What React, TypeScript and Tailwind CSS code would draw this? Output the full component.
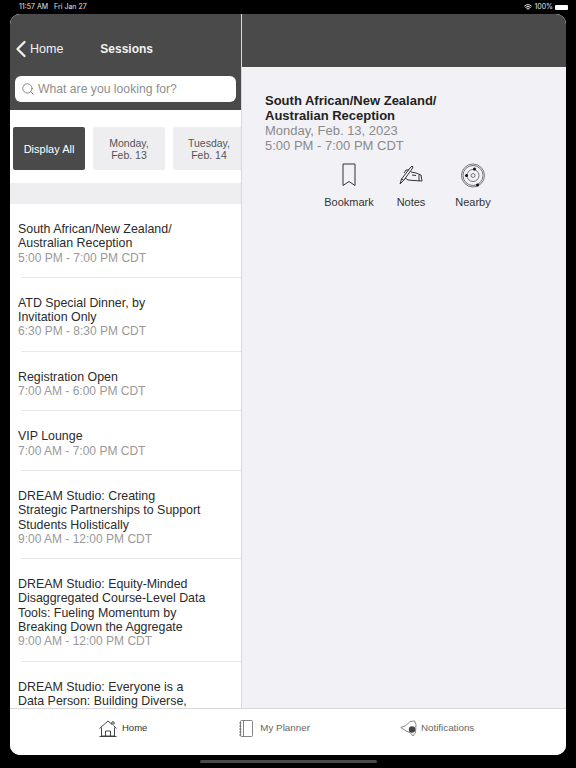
import { Search, ChevronLeft, Wifi } from "lucide-react";

const sessions = [
  { title: ["South African/New Zealand/", "Australian Reception"], time: "5:00 PM - 7:00 PM CDT" },
  { title: ["ATD Special Dinner, by", "Invitation Only"], time: "6:30 PM - 8:30 PM CDT" },
  { title: ["Registration Open"], time: "7:00 AM - 6:00 PM CDT" },
  { title: ["VIP Lounge"], time: "7:00 AM - 7:00 PM CDT" },
  {
    title: ["DREAM Studio: Creating", "Strategic Partnerships to Support", "Students Holistically"],
    time: "9:00 AM - 12:00 PM CDT",
  },
  {
    title: [
      "DREAM Studio: Equity-Minded",
      "Disaggregated Course-Level Data",
      "Tools: Fueling Momentum by",
      "Breaking Down the Aggregate",
    ],
    time: "9:00 AM - 12:00 PM CDT",
  },
  { title: ["DREAM Studio: Everyone is a", "Data Person: Building Diverse,"] },
];

function BookmarkIcon() {
  return (
    <svg width="14" height="24" viewBox="0 0 14 24" fill="none" stroke="#333" strokeWidth="1">
      <path d="M1 1h12v21.5l-6-4-6 4z" />
    </svg>
  );
}

function NotesIcon() {
  return (
    <svg width="24" height="22" viewBox="0 0 24 22" fill="none" stroke="#333" strokeWidth="1" strokeLinejoin="round">
      <path d="M1 20l1.5-5L11 4l2-2 1 1-1 2-8 11z" />
      <path d="M2.5 15l2.5 1.5" />
      <path d="M5 9l2-3h3M12 8l5 1 5 2 1 6-8-.5-6-.5-3-2" />
      <path d="M13 11l4 .5M20 11v6" />
    </svg>
  );
}

function NearbyIcon() {
  return (
    <svg width="24" height="25" viewBox="0 0 24 25" fill="none" stroke="#444" strokeWidth="0.7">
      <circle cx="12" cy="12.5" r="11.5" />
      <circle cx="12" cy="12.5" r="10" />
      <circle cx="12" cy="12.5" r="6" />
      <circle cx="12" cy="12.5" r="2" />
      <circle cx="13.5" cy="6" r="1.5" fill="#111" stroke="none" />
      <circle cx="5.5" cy="12.5" r="1.5" fill="#111" stroke="none" />
      <circle cx="16.5" cy="22" r="1.5" fill="#111" stroke="none" />
    </svg>
  );
}

function HomeIcon() {
  return (
    <svg width="18" height="17" viewBox="0 0 18 17" fill="none" stroke="#333" strokeWidth="0.9">
      <path d="M0.5 8.5L9 1l4 3.5M14.5 5.5l3 3" />
      <circle cx="14" cy="3" r="1.3" />
      <path d="M2.5 7.5V16h13V7.5M0.5 16.5h17" />
      <path d="M6.5 16v-5h5v5" />
    </svg>
  );
}

function PlannerIcon() {
  return (
    <svg width="14" height="17" viewBox="0 0 14 17" fill="none" stroke="#666" strokeWidth="0.8">
      <rect x="1.5" y="0.5" width="12" height="16" rx="1" />
      <path d="M4.5 0.5v16M0 3h2.5M0 6h2.5M0 9h2.5M0 12h2.5M0 15h2.5" />
    </svg>
  );
}

function BellIcon() {
  return (
    <svg width="17" height="17" viewBox="0 0 17 17" fill="none" stroke="#777" strokeWidth="0.9" strokeLinejoin="round">
      <path d="M0.8 7.5L6 5.5 10 1.5l4.5-.5 1.5 3.5-.5 8-2.5 3.5-3-3.5-4-1.5z" />
      <circle cx="12" cy="9.5" r="3.2" fill="#444" stroke="none" />
    </svg>
  );
}

export default function App() {
  return (
    <div className="flex h-[768px] w-[576px] flex-col overflow-hidden bg-black font-['Liberation_Sans',Arial,sans-serif]">
      <div className="flex h-[14px] items-center justify-between pl-[19px] pr-[8px] font-['Inter',sans-serif] text-[7px] text-[#e5e5e5]">
        <div className="flex gap-[6px]">
          <span>11:57 AM</span>
          <span>Fri Jan 27</span>
        </div>
        <div className="flex items-center gap-[2px]">
          <Wifi size={8} strokeWidth={3} />
          <span>100%</span>
          <div className="h-[5px] w-[13px] rounded-[1px] bg-white" />
        </div>
      </div>

      <div className="mx-[10px] flex h-[741px] w-[556px] flex-col overflow-hidden rounded-[10px] bg-white">
        <div className="flex min-h-0 flex-1">
          {/* left column */}
          <div className="flex w-[231px] flex-col overflow-hidden bg-white">
            <div className="h-[96px] bg-[#4a4a4a] px-[5px]">
              <div className="flex h-[62px] items-center pt-[8px] text-white">
                <ChevronLeft size={28} strokeWidth={2} className="ml-[-8px] mr-[-5px] shrink-0 text-[#f2f2f2]" />
                <span className="text-[12.5px] text-[#f2f2f2]">Home</span>
                <span className="ml-[37px] text-[12px] font-bold text-[#f2f2f2]">Sessions</span>
              </div>
              <div className="flex h-[26px] w-[221px] items-center rounded-[6px] bg-white pl-[6px] text-[#8e8e8e]">
                <Search size={14} strokeWidth={1.5} className="text-[#777]" />
                <span className="ml-[3px] text-[12.2px]">What are you looking for?</span>
              </div>
            </div>

            <div className="flex gap-[8px] overflow-hidden pl-[3px] pt-[17px] text-[10.5px] leading-[12px]">
              <div className="flex h-[43px] w-[72px] shrink-0 items-center justify-center rounded-[2px] bg-[#4a4a4a] text-center text-[11px] text-white">
                Display All
              </div>
              <div className="flex h-[43px] w-[72px] shrink-0 items-center justify-center rounded-[2px] bg-[#eeeef1] text-center text-[#555]">
                Monday,
                <br />
                Feb. 13
              </div>
              <div className="flex h-[43px] w-[72px] shrink-0 items-center justify-center rounded-[2px] bg-[#eeeef1] text-center text-[#555]">
                Tuesday,
                <br />
                Feb. 14
              </div>
            </div>

            <div className="mt-[13px] h-[21px] shrink-0 bg-[#eeeef1]" />

            <div className="min-h-0 flex-1 overflow-hidden">
              {sessions.map((s) => (
                <div key={s.title[0]} className="pl-[8px] pt-[18px] text-[12.4px] leading-[14.3px]">
                  <div className="text-[#2b2b2b]">
                    {s.title.map((line) => (
                      <div key={line}>{line}</div>
                    ))}
                  </div>
                  {s.time && <div className="text-[12px] text-[#999]">{s.time}</div>}
                  {s.time && <div className="ml-[3px] mt-[12px] border-b border-[#e8e8ea]" />}
                </div>
              ))}
            </div>
          </div>

          {/* right column */}
          <div className="flex flex-1 flex-col border-l border-[#d8d8da] bg-[#f2f2f6]">
            <div className="h-[53px] shrink-0 bg-[#4a4a4a]" />
            <div className="pl-[23px] pt-[26px] text-[13px] leading-[15px]">
              <div className="font-bold text-[#222]">
                South African/New Zealand/
                <br />
                Australian Reception
              </div>
              <div className="text-[#8a8a8a]">Monday, Feb. 13, 2023</div>
              <div className="text-[#8a8a8a]">5:00 PM - 7:00 PM CDT</div>
            </div>
            <div className="ml-[76px] mt-[9px] flex text-[11px] text-[#333]">
              <div className="flex w-[62px] flex-col items-center">
                <div className="flex h-[26px] items-center">
                  <BookmarkIcon />
                </div>
                <span className="mt-[6px]">Bookmark</span>
              </div>
              <div className="flex w-[62px] flex-col items-center">
                <div className="flex h-[26px] items-center">
                  <NotesIcon />
                </div>
                <span className="mt-[6px]">Notes</span>
              </div>
              <div className="flex w-[62px] flex-col items-center">
                <div className="flex h-[26px] items-center">
                  <NearbyIcon />
                </div>
                <span className="mt-[6px]">Nearby</span>
              </div>
            </div>
          </div>
        </div>

        {/* tab bar */}
        <div className="flex h-[47px] shrink-0 items-center border-t border-[#d8d8da] bg-white pb-[7px] text-[9.8px]">
          <div className="ml-[89px] flex items-center gap-[5px] text-[#333]">
            <HomeIcon />
            <span className="text-[9.5px]">Home</span>
          </div>
          <div className="ml-[92px] flex items-center gap-[7px] text-[#666]">
            <PlannerIcon />
            <span>My Planner</span>
          </div>
          <div className="ml-[90px] flex items-center gap-[4px] text-[#666]">
            <BellIcon />
            <span>Notifications</span>
          </div>
        </div>
      </div>

      <div className="flex flex-1 justify-center pt-[5px]">
        <div className="h-[3px] w-[177px] rounded-full bg-[#4a4a4a]" />
      </div>
    </div>
  );
}
